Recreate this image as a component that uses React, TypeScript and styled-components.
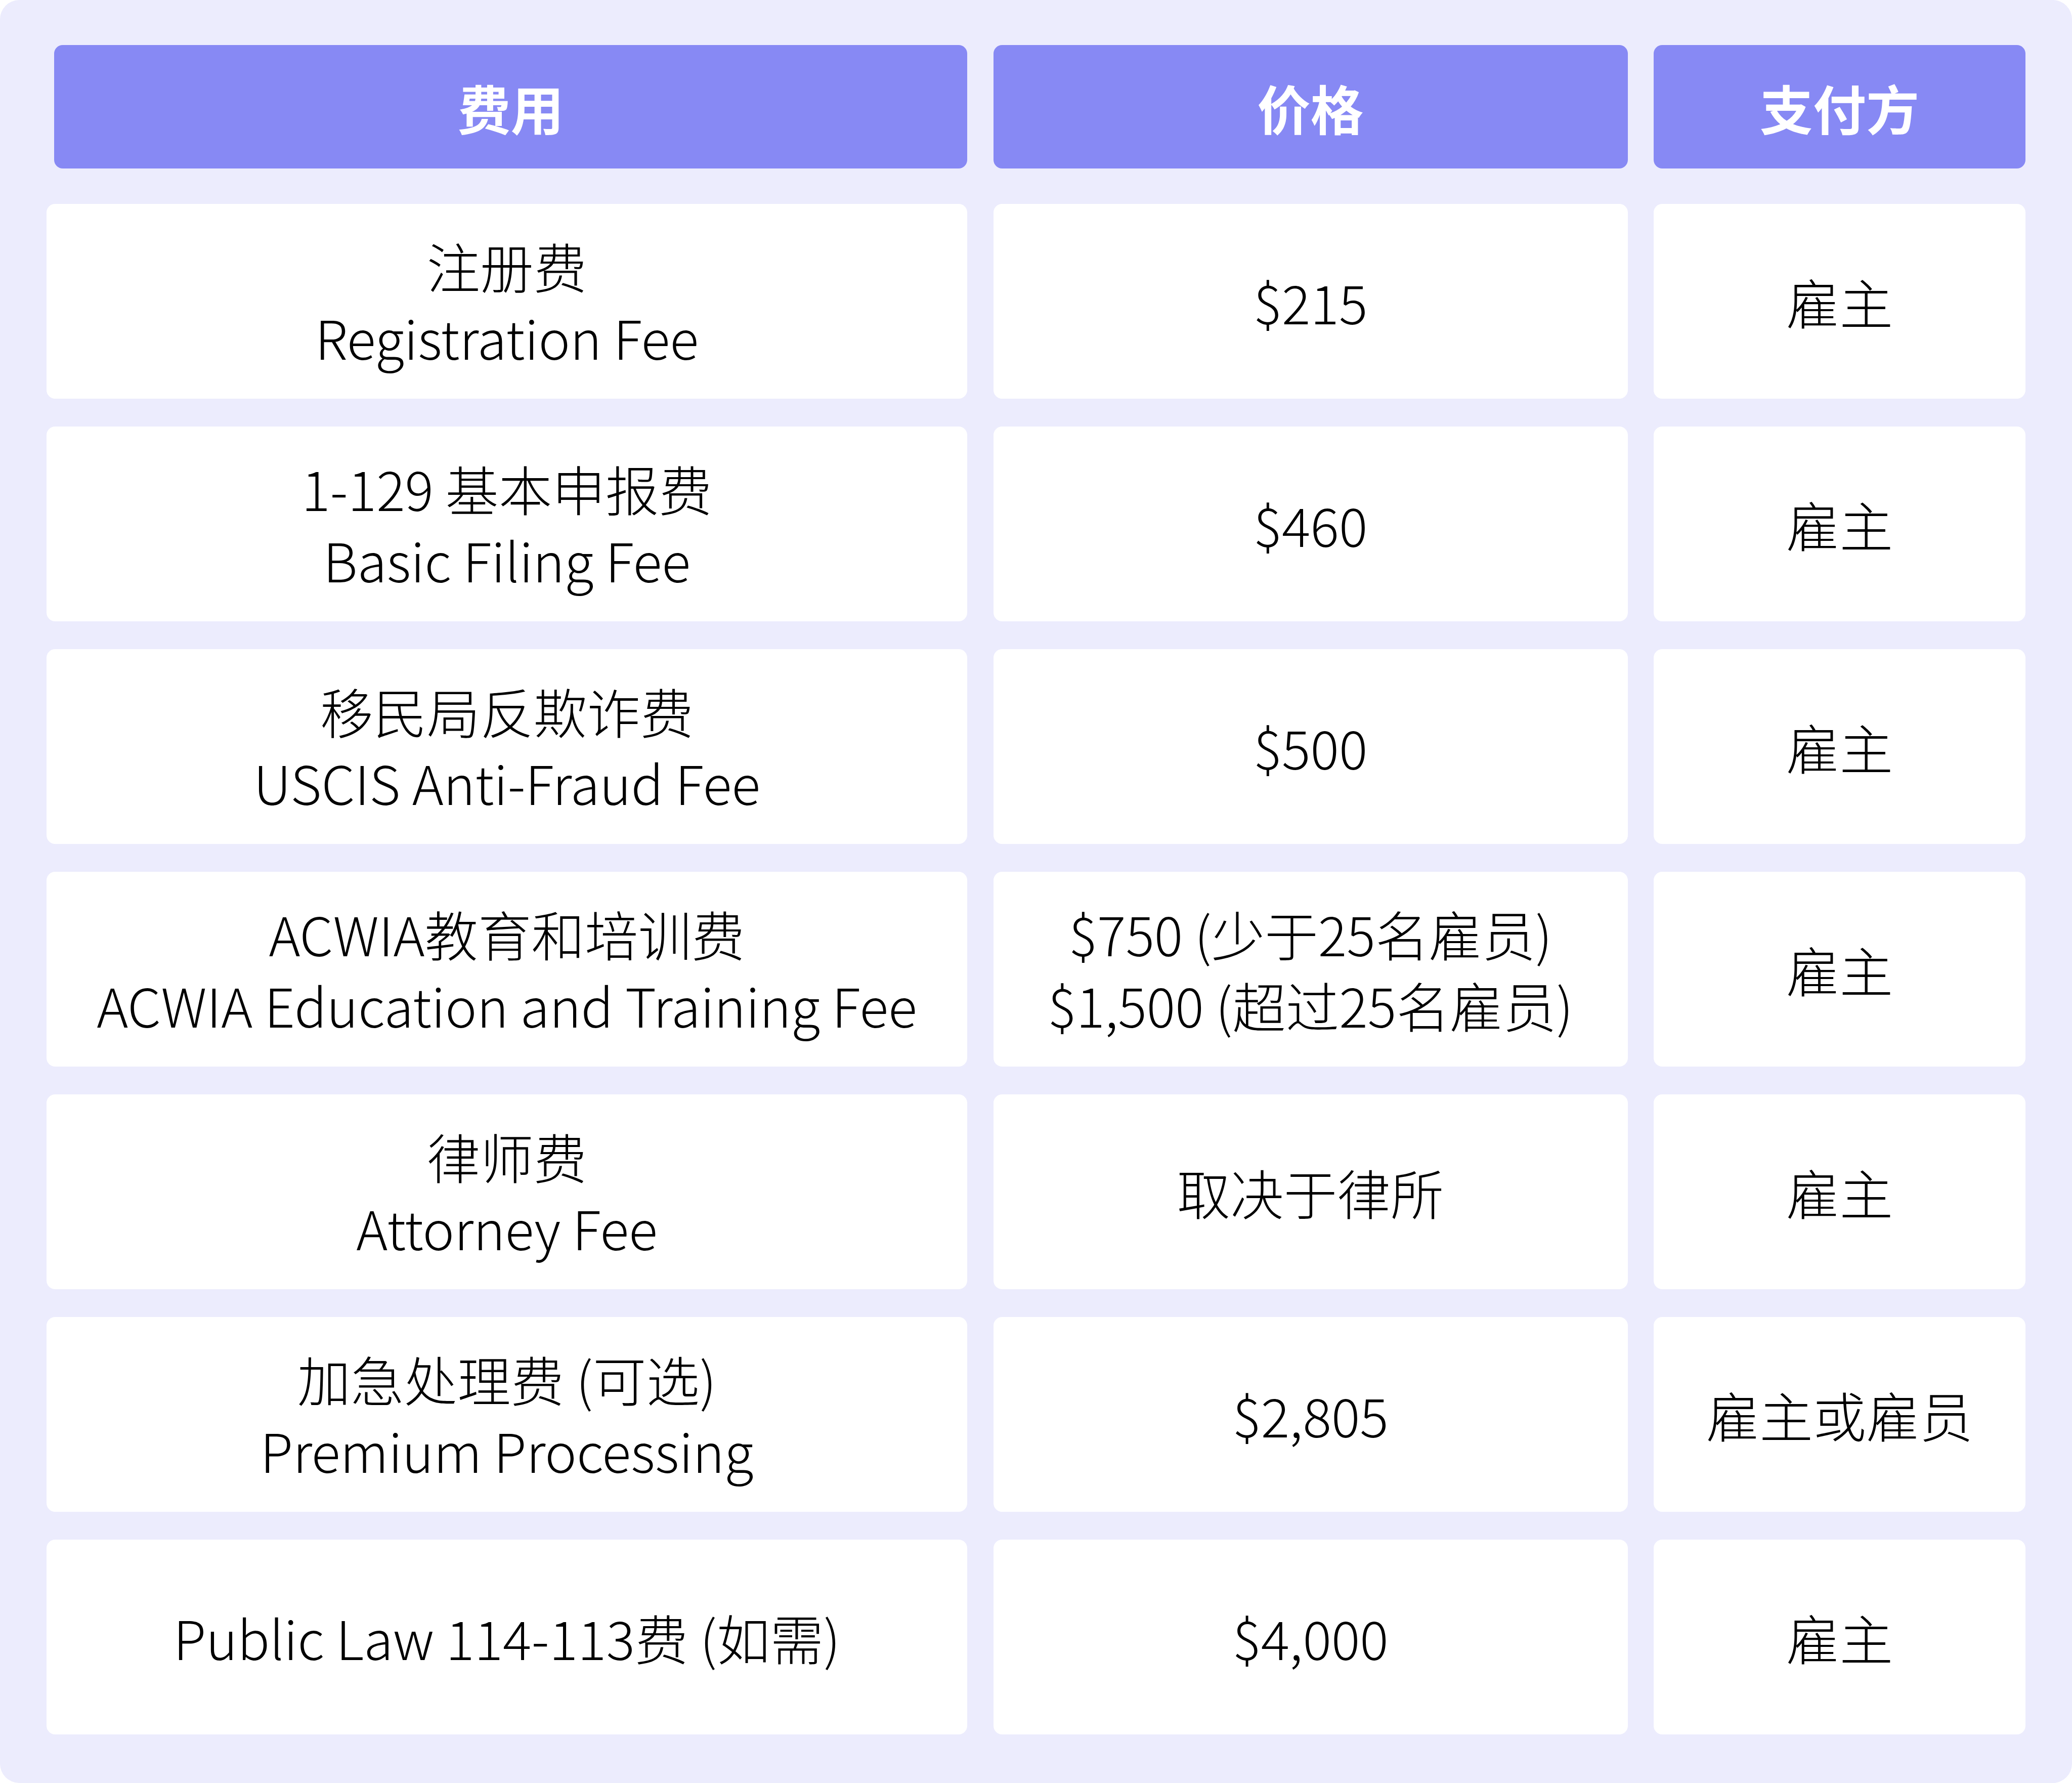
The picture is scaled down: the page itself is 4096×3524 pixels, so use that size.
import React from "react";
import styled, { createGlobalStyle } from "styled-components";

const Global = createGlobalStyle`
  html, body { margin: 0; padding: 0; background: #ffffff; }
  #root { width: 4096px; height: 3524px; }
`;

const Panel = styled.div`
  box-sizing: border-box;
  width: 4096px;
  height: 3524px;
  background: #ececfd;
  border-radius: 38px;
  padding: 89px 92px 90px 92px;
  display: grid;
  grid-template-columns: 1820px 1254px 1fr;
  grid-template-rows: 258.5px;
  grid-auto-rows: 385px;
  column-gap: 51.5px;
  row-gap: 55px;
  font-family: "Noto Sans CJK SC", "Noto Sans", sans-serif;
`;

const HeadCell = styled.div<{ $inset?: boolean }>`
  background: #8789f4;
  border-radius: 17px;
  margin-left: ${(p) => (p.$inset ? "15px" : "0")};
  margin-bottom: 14.5px;
  display: flex;
  align-items: center;
  justify-content: center;
  color: #ffffff;
  font-weight: 700;
  font-size: 105px;
  line-height: 1;
  letter-spacing: 0;
`;

const Cell = styled.div`
  background: #ffffff;
  border-radius: 17px;
  display: flex;
  flex-direction: column;
  align-items: center;
  justify-content: center;
  text-align: center;
  color: #000000;
  font-weight: 300;
  font-size: 105.5px;
  line-height: 141px;
  white-space: nowrap;
`;

const Line = styled.span`
  display: block;
`;

type Row = { fee: string[]; price: string[]; payer: string };

const rows: Row[] = [
  { fee: ["注册费", "Registration Fee"], price: ["$215"], payer: "雇主" },
  { fee: ["1-129 基本申报费", "Basic Filing Fee"], price: ["$460"], payer: "雇主" },
  { fee: ["移民局反欺诈费", "USCIS Anti-Fraud Fee"], price: ["$500"], payer: "雇主" },
  {
    fee: ["ACWIA教育和培训费", "ACWIA Education and Training Fee"],
    price: ["$750 (少于25名雇员)", "$1,500 (超过25名雇员)"],
    payer: "雇主",
  },
  { fee: ["律师费", "Attorney Fee"], price: ["取决于律所"], payer: "雇主" },
  { fee: ["加急处理费 (可选)", "Premium Processing"], price: ["$2,805"], payer: "雇主或雇员" },
  { fee: ["Public Law 114-113费 (如需)"], price: ["$4,000"], payer: "雇主" },
];

export default function App() {
  return (
    <>
      <Global />
      <Panel>
        <HeadCell $inset>费用</HeadCell>
        <HeadCell>价格</HeadCell>
        <HeadCell>支付方</HeadCell>
        {rows.map((r, i) => (
          <React.Fragment key={i}>
            <Cell>
              {r.fee.map((t, j) => (
                <Line key={j}>{t}</Line>
              ))}
            </Cell>
            <Cell>
              {r.price.map((t, j) => (
                <Line key={j}>{t}</Line>
              ))}
            </Cell>
            <Cell>
              <Line>{r.payer}</Line>
            </Cell>
          </React.Fragment>
        ))}
      </Panel>
    </>
  );
}
